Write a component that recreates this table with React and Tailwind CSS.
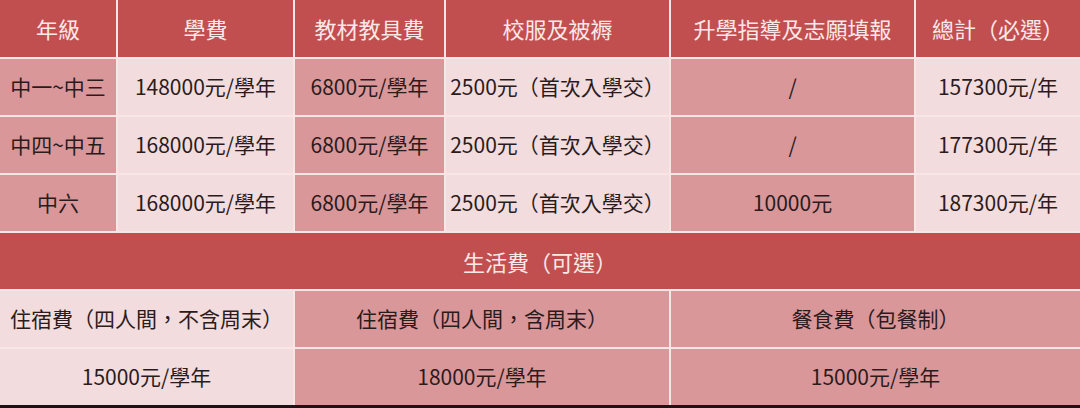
import React from "react";

const head = ["年級", "學費", "教材教具費", "校服及被褥", "升學指導及志願填報", "總計（必選）"];

const rows = [
  ["中一~中三", "148000元/學年", "6800元/學年", "2500元（首次入學交）", "/", "157300元/年"],
  ["中四~中五", "168000元/學年", "6800元/學年", "2500元（首次入學交）", "/", "177300元/年"],
  ["中六", "168000元/學年", "6800元/學年", "2500元（首次入學交）", "10000元", "187300元/年"],
];

// alternating column tint, medium / light
const tint = ["bg-[#d9979a]", "bg-[#f2dcdd]", "bg-[#d9979a]", "bg-[#f2dcdd]", "bg-[#d9979a]", "bg-[#f2dcdd]"];

export default function App() {
  return (
    <div
      className="w-[1080px] h-[408px] bg-[#f8e6e6] flex flex-col gap-[2px] border-b-[3px] border-[#1a1414] overflow-hidden"
      style={{ fontFamily: '"Noto Sans CJK TC", "Noto Sans CJK SC", sans-serif' }}
    >
      <div className="grid grid-cols-[116px_175px_149px_223px_243px_164px] gap-[2px]">
        {head.map((h) => (
          <div
            key={h}
            className="h-[57px] bg-[#c14f4f] text-[#fce8e8] text-[22px] flex items-center justify-center whitespace-nowrap"
          >
            {h}
          </div>
        ))}
        {rows.map((r, i) =>
          r.map((c, j) => (
            <div
              key={i + "-" + j}
              className={`h-[56px] ${tint[j]} text-[#2b1b1c] text-[21px] flex items-center justify-center whitespace-nowrap`}
            >
              {c}
            </div>
          ))
        )}
      </div>

      <div className="h-[56px] bg-[#c14f4f] text-[#fce8e8] text-[22px] flex items-center justify-center">
        生活費（可選）
      </div>

      <div className="grid grid-cols-[293px_374px_409px] gap-[2px]">
        <div className="h-[56px] bg-[#f2dcdd] text-[#2b1b1c] text-[21px] flex items-center justify-center whitespace-nowrap">
          住宿費（四人間，不含周末）
        </div>
        <div className="h-[56px] bg-[#d9979a] text-[#2b1b1c] text-[21px] flex items-center justify-center whitespace-nowrap">
          住宿費（四人間，含周末）
        </div>
        <div className="h-[56px] bg-[#d9979a] text-[#2b1b1c] text-[21px] flex items-center justify-center whitespace-nowrap">
          餐食費（包餐制）
        </div>
        <div className="h-[56px] bg-[#f2dcdd] text-[#2b1b1c] text-[21px] flex items-center justify-center">
          15000元/學年
        </div>
        <div className="h-[56px] bg-[#d9979a] text-[#2b1b1c] text-[21px] flex items-center justify-center">
          18000元/學年
        </div>
        <div className="h-[56px] bg-[#d9979a] text-[#2b1b1c] text-[21px] flex items-center justify-center">
          15000元/學年
        </div>
      </div>
    </div>
  );
}
